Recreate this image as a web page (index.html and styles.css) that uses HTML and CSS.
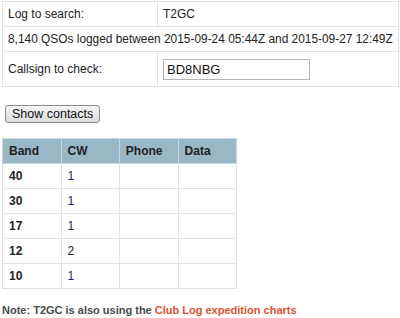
FILE: index.html
```html
<!DOCTYPE html>
<html lang="en">
<head>
    <meta charset="UTF-8">
    <title>Log search</title>
    <link rel="stylesheet" href="styles.css">
</head>
<body>
    <form class="search">
        <table class="info">
            <tr>
                <td class="label">Log to search:</td>
                <td>T2GC</td>
            </tr>
            <tr>
                <td colspan="2" class="span">8,140 QSOs logged between 2015-09-24 05:44Z and 2015-09-27 12:49Z</td>
            </tr>
            <tr>
                <td class="label">Callsign to check:</td>
                <td><input type="text" class="call" value="BD8NBG"></td>
            </tr>
        </table>
        <button type="button" class="show">Show contacts</button>
    </form>

    <table class="bands">
        <tr>
            <th>Band</th>
            <th>CW</th>
            <th>Phone</th>
            <th>Data</th>
        </tr>
        <tr><td class="band">40</td><td><a href="#">1</a></td><td></td><td></td></tr>
        <tr><td class="band">30</td><td><a href="#">1</a></td><td></td><td></td></tr>
        <tr><td class="band">17</td><td><a href="#">1</a></td><td></td><td></td></tr>
        <tr><td class="band">12</td><td>2</td><td></td><td></td></tr>
        <tr><td class="band">10</td><td><a href="#">1</a></td><td></td><td></td></tr>
    </table>

    <p class="note">Note: T2GC is also using the <a href="#">Club Log expedition charts</a></p>
</body>
</html>
```

FILE: styles.css
```css
body {
    margin: 0;
    padding: 1px 2px;
    font-family: "Liberation Sans", Arial, sans-serif;
    font-size: 12px;
    color: #222;
    background: #fff;
}
table {
    border-collapse: collapse;
}
.info {
    width: 392px;
}
.info td {
    border: 1px solid #e2e2e2;
    padding: 0 5px;
    height: 24px;
}
.info .span {
    white-space: nowrap;
    font-size: 11.9px;
}
.info tr:last-child td {
    height: 34px;
}
.info .label {
    width: 144px;
}
.call {
    width: 139px;
    height: 17px;
    padding: 1px 3px;
    margin: 0;
    border: 1px solid #b5b5b5;
    font-family: "Liberation Sans", Arial, sans-serif;
    font-size: 13px;
    color: #111;
}
.show {
    margin: 18px 0 15px 3px;
    padding: 1px 6px;
    font-family: "Liberation Sans", Arial, sans-serif;
    font-size: 12.5px;
    color: #111;
    background: linear-gradient(#f6f6f6, #dcdcdc);
    border: 1px solid #8e8e8e;
    border-radius: 3px;
}
.bands {
    width: 235px;
}
.bands th,
.bands td {
    border: 1px solid #e2e2e2;
    padding: 0 6px;
    height: 24px;
    width: 46px;
    text-align: left;
}
.bands th {
    background: #98b8c6;
    color: #222;
    border-color: #c9d8df;
}
.bands .band {
    font-weight: bold;
}
.bands a {
    color: #2b1470;
    text-decoration: none;
}
.note {
    margin: 15px 0 0;
    font-size: 11px;
    font-weight: bold;
    color: #4a4a4a;
}
.note a {
    color: #e0522e;
    text-decoration: none;
}
```
